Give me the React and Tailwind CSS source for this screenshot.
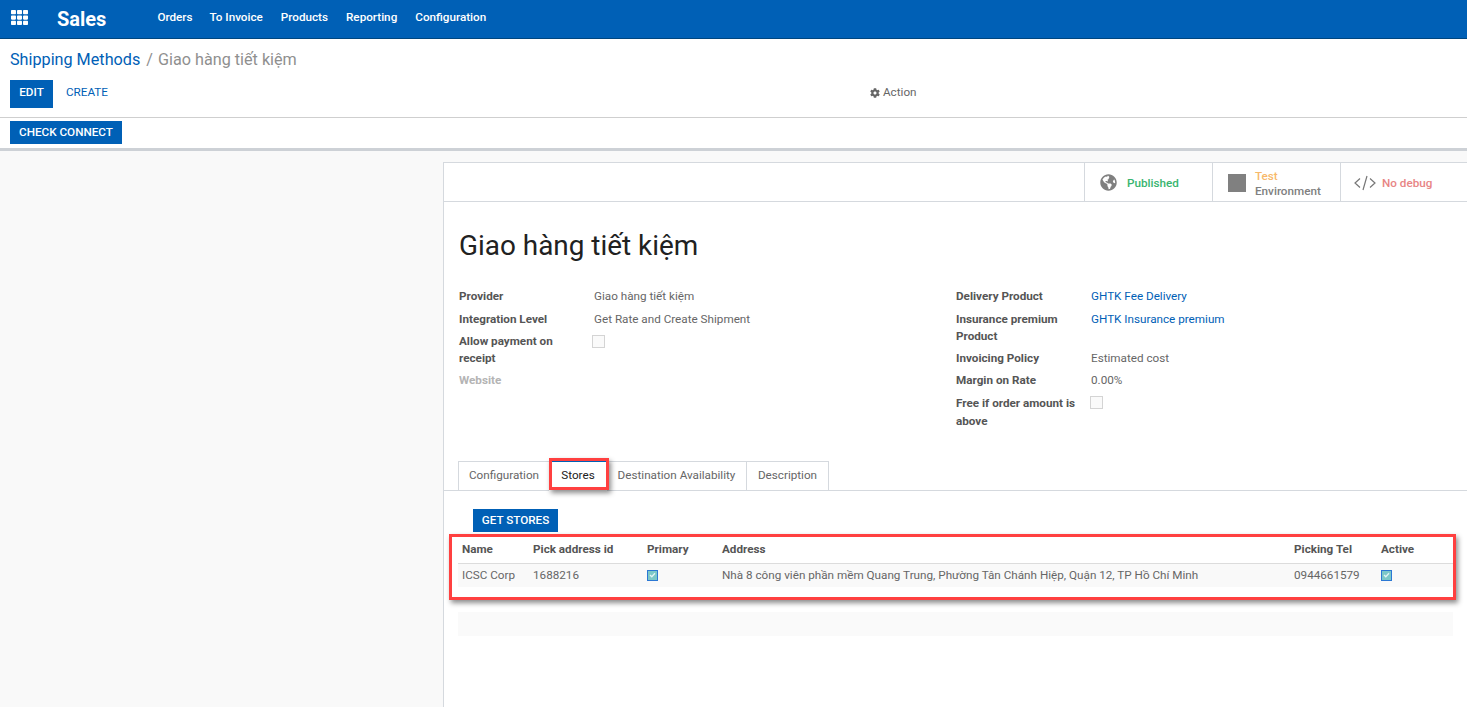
import { FaTh, FaCog, FaGlobeAmericas } from 'react-icons/fa';

function Field({ label, value, muted, link, check, tall, shift }) {
  return (
    <div className="flex mb-[5px]">
      <div className={`w-[135px] shrink-0 pr-[10px] font-bold ${tall ? 'leading-[18px]' : 'leading-[17px]'} ${muted ? 'text-[#b4b4b4]' : 'text-[#555555]'}`}>{label}</div>
      {check ? (
        <div className={`w-[13px] h-[13px] border border-[#d4d4d4] bg-[#fafafa] mt-[2px] ${shift ? '-ml-[1px]' : '-ml-[2px]'}`} />
      ) : (
        <div className={`leading-[17px] ${link ? 'text-[#0060b6]' : 'text-[#666666]'}`}>{value}</div>
      )}
    </div>
  );
}

function Tick() {
  return (
    <div className="w-[11px] h-[11px] border border-[#2c78d4] bg-[#7cc8c8] flex items-center justify-center">
      <svg width="7" height="6" viewBox="0 0 7 6" fill="none" stroke="#e4f4f4" strokeWidth="1.3">
        <path d="M1 3l1.8 1.8L6 1.2" />
      </svg>
    </div>
  );
}

export default function App() {
  return (
    <div className="h-[707px] overflow-hidden bg-white text-[11.7px] text-[#555555] font-['Roboto',sans-serif]">
      {/* top bar */}
      <div className="h-[39px] bg-[#0060b6] border-b border-[#00467f] flex items-center text-white">
        <FaTh className="ml-[11px] text-[17px] -mt-[3px]" />
        <div className="ml-[29px] text-[20px] font-bold -mt-[1px]">Sales</div>
        <div className="ml-[51px] flex gap-[18px] font-medium -mt-[3px]">
          <span className="-mr-[1px]">Orders</span>
          <span>To Invoice</span>
          <span>Products</span>
          <span>Reporting</span>
          <span>Configuration</span>
        </div>
      </div>

      {/* control panel */}
      <div className="h-[79px] border-b border-[#cfcfcf] pl-[10px]">
        <div className="pt-[10px] h-[41px] text-[16.2px] leading-[21px]">
          <span className="text-[#0060b6]">Shipping Methods</span>
          <span className="text-[#8f8f8f] ml-[6px]">/</span>
          <span className="text-[#8f8f8f] ml-[5px]">Giao hàng tiết kiệm</span>
        </div>
        <div className="flex items-center h-[28px]">
          <button className="h-[28px] w-[43px] bg-[#0060b6] text-white font-medium pb-[2px]">EDIT</button>
          <button className="ml-[13px] text-[#0060b6] pb-[2px]">CREATE</button>
          <div className="ml-[762px] flex items-center gap-[3px] text-[#666666] pb-[2px]">
            <FaCog className="text-[10px]" />
            <span>Action</span>
          </div>
        </div>
      </div>
      <div className="h-[33px] border-b-[3px] border-[#cdd1d6] pl-[10px] pt-[3px]">
        <button className="h-[23px] w-[112px] bg-[#0060b6] text-white font-medium">CHECK CONNECT</button>
      </div>

      {/* content */}
      <div className="h-[556px] bg-[#f9f9f9] pl-[443px] pt-[11px]">
        <div className="h-full bg-white border-l border-t border-[#d5d9de] relative">
          <div className="h-[39px] border-b border-[#d5d9de] flex justify-end">
            <div className="w-[128px] border-l border-[#d5d9de] flex items-center pl-[15px]">
              <FaGlobeAmericas className="text-[17px] text-[#7f7f7f] mt-[1px]" />
              <span className="ml-[10px] mt-[3px] text-[#39b56f] font-medium">Published</span>
            </div>
            <div className="w-[128px] border-l border-[#d5d9de] flex items-center pl-[15px]">
              <div className="w-[18px] h-[18px] bg-[#808080] mt-[1px]" />
              <div className="ml-[9px] mt-[3px] leading-[15px] font-medium">
                <div className="text-[#f7b96b]">Test</div>
                <div className="text-[#808080]">Environment</div>
              </div>
            </div>
            <div className="w-[127px] border-l border-[#d5d9de] flex items-center pl-[13px]">
              <svg className="mt-[2px]" width="22" height="16" viewBox="0 0 22 16" fill="none" stroke="#777" strokeWidth="1.2">
                <path d="M6 3.5 1 8l5 4.5M16 3.5 21 8l-5 4.5M13 1 9 15" />
              </svg>
              <span className="ml-[6px] mt-[3px] text-[#e88585] font-medium">No debug</span>
            </div>
          </div>

          <div className="pl-[15px] pt-[26px] h-[85px] text-[27.9px] leading-[36px] text-[#212121]">Giao hàng tiết kiệm</div>

          <div className="pl-[15px] pt-[1px] flex h-[174px]">
            <div className="w-[497px]">
              <Field label="Provider" value="Giao hàng tiết kiệm" />
              <div className="mt-[6px]"><Field label="Integration Level" value="Get Rate and Create Shipment" /></div>
              <Field label="Allow payment on receipt" check />
              <Field label="Website" muted value="" />
            </div>
            <div>
              <Field label="Delivery Product" value="GHTK Fee Delivery" link />
              <div className="mt-[6px]"><Field label="Insurance premium Product" value="GHTK Insurance premium" link /></div>
              <Field label="Invoicing Policy" value="Estimated cost" />
              <Field label="Margin on Rate" value="0.00%" />
              <Field label="Free if order amount is above" check tall shift />
            </div>
          </div>

          {/* tabs */}
          <div className="h-[30px] border-b border-[#d5d9de] pl-[14px] flex">
            <div className="h-[30px] w-[91px] border-l border-t border-[#d5d9de] flex items-center justify-center pb-[2px] text-[#666666]">Configuration</div>
            <div className="h-[30px] w-[58px] bg-white border-t border-[#0060b6] flex items-center justify-center pb-[2px] text-[#212121]">Stores</div>
            <div className="h-[30px] w-[140px] border-t border-r border-[#d5d9de] flex items-center justify-center pb-[2px] text-[#666666]">Destination Availability</div>
            <div className="h-[30px] w-[82px] border-t border-r border-[#d5d9de] flex items-center justify-center pb-[2px] text-[#666666]">Description</div>
          </div>

          <div className="pl-[29px] pt-[18px]">
            <button className="h-[23px] w-[85px] bg-[#0060b6] text-white font-medium">GET STORES</button>
          </div>

          {/* stores table */}
          <div className="mx-[14px] mt-[4px]">
            <table className="w-full table-fixed border-collapse">
              <thead>
                <tr className="h-[27px] border-b border-[#dcdcdc] text-left">
                  <th className="w-[71px] pl-[4px] pt-[2px] font-bold">Name</th>
                  <th className="w-[114px] pl-[4px] pt-[2px] font-bold">Pick address id</th>
                  <th className="w-[75px] pl-[4px] pt-[2px] font-bold">Primary</th>
                  <th className="w-[572px] pl-[4px] pt-[2px] font-bold">Address</th>
                  <th className="w-[87px] pl-[4px] pt-[2px] font-bold">Picking Tel</th>
                  <th className="pl-[4px] pt-[2px] font-bold">Active</th>
                </tr>
              </thead>
              <tbody>
                <tr className="h-[24px] bg-[#f9f9f9] text-[#666666]">
                  <td className="pl-[4px] pt-[1px]">ICSC Corp</td>
                  <td className="pl-[4px] pt-[1px]">1688216</td>
                  <td className="pl-[4px]"><Tick /></td>
                  <td className="pl-[4px] pt-[1px]">Nhà 8 công viên phần mềm Quang Trung, Phường Tân Chánh Hiệp, Quận 12, TP Hồ Chí Minh</td>
                  <td className="pl-[4px] pt-[1px]">0944661579</td>
                  <td className="pl-[4px]"><Tick /></td>
                </tr>
              </tbody>
            </table>
            <div className="mt-[25px] h-[24px] bg-[#fafafa]" />
          </div>

          {/* red highlight boxes */}
          <div className="absolute left-[105px] top-[295px] w-[60px] h-[32px] border-[3px] border-[#ff4040] shadow-[2px_3px_5px_rgba(0,0,0,0.45)]" />
          <div className="absolute left-[5px] top-[371px] w-[1007px] h-[66px] border-[3px] border-[#ff4040] shadow-[2px_3px_5px_rgba(0,0,0,0.45)]" />
        </div>
      </div>
    </div>
  );
}
